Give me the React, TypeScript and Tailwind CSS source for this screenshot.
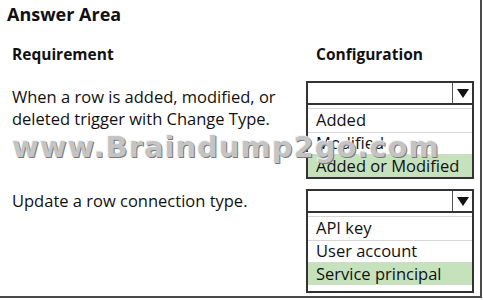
import React from 'react';

type DropdownProps = {
  options: string[];
  selected: number;
  extraBottom?: boolean;
};

const Dropdown = ({ options, selected, extraBottom }: DropdownProps) => {
  return (
    <div className="w-[168px]">
      <div className="flex h-[24px] border-2 border-[#333]">
        <div className="flex-1" />
        <div className="flex w-[20px] items-center justify-center border-l border-[#555]">
          <svg width="12" height="9" viewBox="0 0 12 9">
            <polygon points="0,0 12,0 6,9" fill="#111" />
          </svg>
        </div>
      </div>
      <div className={`border-x-2 border-b-2 border-[#333] pt-[3px] ${extraBottom ? 'pb-[6px]' : ''}`}>
        <div className="border-t border-[#d6d6d6]" />
        {options.map((opt, i) => (
          <div
            key={opt}
            className={`flex items-center pl-[8px] text-[16.5px] text-[#111] ${i === 0 ? 'h-[24px]' : 'h-[22px]'} ${
              i === selected ? 'bg-[#c6e2bd]' : ''
            } ${i < options.length - 1 ? 'border-b border-[#d6d6d6]' : ''}`}
          >
            {opt}
          </div>
        ))}
      </div>
    </div>
  );
};

export default function App() {
  return (
    <div className="relative h-[300px] w-[483px] bg-white font-['Open_Sans',sans-serif] text-[#111]">
      <div className="h-[298px] w-[482px] border-b-2 border-r-2 border-[#4a4a4a]">
        <div className="pl-[7px] pt-[1px] text-[18px] font-bold leading-[26px]">Answer Area</div>

        <div className="mt-[16px] grid grid-cols-[294px_168px] pl-[12px]">
          <div className="text-[15.5px] font-bold leading-[22px]">Requirement</div>
          <div className="pl-[10px] text-[15.5px] font-bold leading-[22px]">Configuration</div>
        </div>

        <div className="mt-[16px] grid grid-cols-[294px_168px] pl-[12px]">
          <div className="pt-[5px] text-[16.5px] leading-[22px]">
            When a row is added, modified, or
            <br />
            deleted trigger with Change Type.
          </div>
          <Dropdown options={['Added', 'Modified', 'Added or Modified']} selected={2} />
        </div>

        <div className="mt-[10px] grid grid-cols-[294px_168px] pl-[12px]">
          <div className="pt-[1px] text-[16.5px] leading-[22px]">Update a row connection type.</div>
          <Dropdown options={['API key', 'User account', 'Service principal']} selected={2} extraBottom />
        </div>
      </div>

      {/* watermark over the content */}
      <div className="pointer-events-none absolute left-[12px] top-[131px] font-['DejaVu_Sans',sans-serif] text-[29px] font-bold leading-[32px] tracking-[1px] text-[#c4c4c4] [text-shadow:1px_1px_0_#7a7a7a,-1px_-1px_0_#f4f4f4]">
        www.Braindump2go.com
      </div>
    </div>
  );
}
